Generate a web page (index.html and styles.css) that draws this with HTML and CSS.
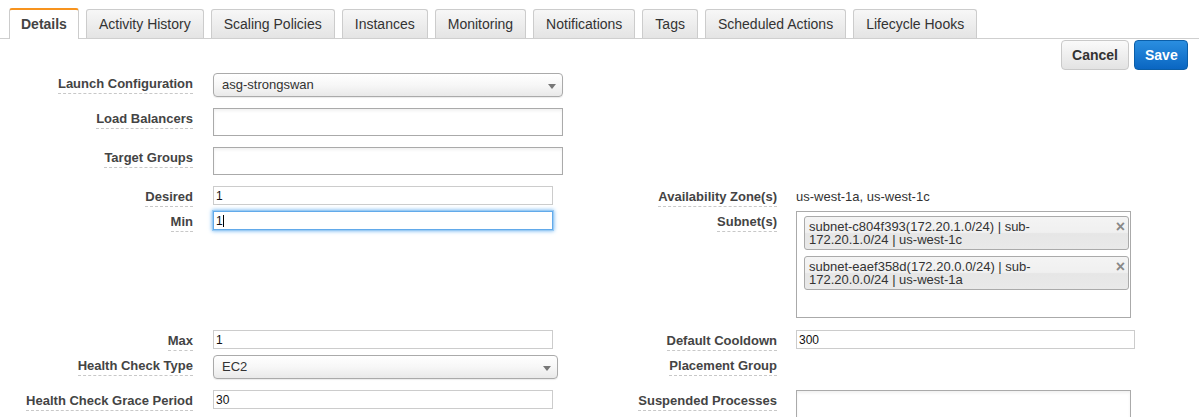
FILE: index.html
```html
<!DOCTYPE html>
<html>
<head>
<meta charset="utf-8">
<link rel="stylesheet" href="styles.css">
</head>
<body>
<div class="tabs">
  <div class="tab active">Details</div>
  <div class="tab">Activity History</div>
  <div class="tab">Scaling Policies</div>
  <div class="tab">Instances</div>
  <div class="tab">Monitoring</div>
  <div class="tab">Notifications</div>
  <div class="tab">Tags</div>
  <div class="tab">Scheduled Actions</div>
  <div class="tab">Lifecycle Hooks</div>
</div>
<div class="toolbar">
  <button class="btn btn-cancel">Cancel</button>
  <button class="btn btn-save">Save</button>
</div>
<div class="form">
  <div class="lab"><span>Launch Configuration</span></div>
  <div class="fld"><div class="select w350"><span>asg-strongswan</span><i class="arrow"></i></div></div>
  <div class="lab2"></div><div class="fld2"></div>

  <div class="lab"><span>Load Balancers</span></div>
  <div class="fld"><div class="multi w350"></div></div>
  <div class="lab2"></div><div class="fld2"></div>

  <div class="lab"><span>Target Groups</span></div>
  <div class="fld"><div class="multi w350"></div></div>
  <div class="lab2"></div><div class="fld2"></div>

  <div class="lab"><span>Desired</span></div>
  <div class="fld"><input class="text w340" value="1"></div>
  <div class="lab2"><span>Availability Zone(s)</span></div>
  <div class="fld2"><div class="value">us-west-1a, us-west-1c</div></div>

  <div class="lab"><span>Min</span></div>
  <div class="fld"><div class="focuswrap"><input class="text w340 focus" value="1"><i class="caret"></i></div></div>
  <div class="lab2"><span>Subnet(s)</span></div>
  <div class="fld2">
    <div class="subnets">
      <div class="chip"><div class="chiptext"><div>subnet-c804f393(172.20.1.0/24) | sub-</div><div>172.20.1.0/24 | us-west-1c</div></div><span class="x">×</span></div>
      <div class="chip"><div class="chiptext"><div>subnet-eaef358d(172.20.0.0/24) | sub-</div><div>172.20.0.0/24 | us-west-1a</div></div><span class="x">×</span></div>
    </div>
  </div>

  <div class="lab"><span>Max</span></div>
  <div class="fld"><input class="text w340" value="1"></div>
  <div class="lab2"><span>Default Cooldown</span></div>
  <div class="fld2"><input class="text w339" value="300"></div>

  <div class="lab"><span>Health Check Type</span></div>
  <div class="fld"><div class="select w345"><span>EC2</span><i class="arrow"></i></div></div>
  <div class="lab2"><span>Placement Group</span></div>
  <div class="fld2"></div>

  <div class="lab"><span>Health Check Grace Period</span></div>
  <div class="fld"><input class="text w340" value="30"></div>
  <div class="lab2"><span>Suspended Processes</span></div>
  <div class="fld2"><div class="multi w335 tall"></div></div>
</div>
</body>
</html>
```
FILE: styles.css
```css
* { box-sizing: border-box; }
html, body { margin: 0; padding: 0; background: #fff; }
body {
  font-family: "Liberation Sans", Arial, Helvetica, sans-serif;
  color: #333;
  font-size: 13px;
  overflow: hidden;
  height: 417px;
}
.tabs {
  display: flex;
  align-items: flex-end;
  gap: 7px;
  padding: 8px 0 0 9px;
  border-bottom: 1px solid #cfcfcf;
}
.tab {
  height: 29px;
  line-height: 28px;
  padding: 0 12px;
  font-size: 14px;
  color: #333;
  border: 1px solid #cccccc;
  border-bottom: none;
  border-radius: 3px 3px 0 0;
  background: linear-gradient(#f7f7f7, #e4e4e4);
  white-space: nowrap;
}
.tab.active {
  height: 31px;
  margin-bottom: -1px;
  border-top: 2px solid #f7931e;
  background: #fff;
  font-weight: bold;
  color: #444;
  line-height: 29px;
  padding: 0 11px;
}
.toolbar {
  display: flex;
  justify-content: flex-end;
  gap: 5px;
  padding: 1px 11px 0 0;
}
.btn {
  height: 30px;
  font-family: "Liberation Sans", Arial, sans-serif;
  font-size: 14px;
  font-weight: bold;
  border-radius: 4px;
  padding: 0 10px;
  cursor: pointer;
}
.btn-cancel {
  width: 68px;
  color: #333;
  border: 1px solid #c9c9c9;
  background: linear-gradient(#fafafa, #e3e3e3);
}
.btn-save {
  width: 54px;
  color: #fff;
  border: 1px solid #0b5ea8;
  background: linear-gradient(#2a8ee0, #0a66c2);
}
.form {
  display: grid;
  grid-template-columns: 213px 350px 233px 403px;
  padding-top: 3px;
}
.lab, .lab2 {
  text-align: right;
  padding-right: 20px;
}
.lab2 { padding-right: 19px; }
.lab span, .lab2 span {
  display: inline-block;
  font-weight: bold;
  color: #444;
  font-size: 13px;
  line-height: 15px;
  padding-top: 3px;
  padding-bottom: 2px;
  border-bottom: 1px dashed #c8c8c8;
}
.fld, .fld2 { min-height: 1px; }
.w350 { width: 350px; }
.w345 { width: 345px; }
.w340 { width: 340px; }
.w339 { width: 339px; }
.w335 { width: 335px; }
.select {
  position: relative;
  height: 24px;
  border: 1px solid #aaa;
  border-radius: 4px;
  background: linear-gradient(#ffffff 0%, #f7f7f7 50%, #e9e9e9 100%);
  box-shadow: 0 1px 1px rgba(0,0,0,0.08);
  padding: 0 0 0 8px;
  font-size: 13px;
  line-height: 22px;
  color: #333;
  margin-bottom: 11px;
}
.arrow {
  position: absolute;
  right: 6px;
  top: 10px;
  width: 0;
  height: 0;
  border-left: 4px solid transparent;
  border-right: 4px solid transparent;
  border-top: 5px solid #777;
}
.multi {
  height: 28px;
  border: 1px solid #aaa;
  background: #fff;
  box-shadow: inset 0 2px 3px rgba(0,0,0,0.06);
  margin-bottom: 11px;
}
.multi.tall { height: 60px; }
.text {
  display: block;
  height: 19px;
  border: 1px solid #cccccc;
  padding: 0 2px;
  font-family: "Liberation Sans", Arial, sans-serif;
  font-size: 12px;
  color: #111;
  margin: 0 0 6px 0;
  outline: none;
  background: #fff;
}
.focuswrap { position: relative; width: 340px; }
.text.focus {
  border: 1px solid #62aaea;
  box-shadow: 0 0 0 1px #9bcbf3, 0 0 4px 1px #6db4f2;
}
.caret {
  position: absolute;
  left: 10px;
  top: 4px;
  width: 1px;
  height: 12px;
  background: #000;
}
.value {
  font-size: 13px;
  color: #333;
  line-height: 15px;
  padding-top: 3px;
}
.subnets {
  width: 335px;
  height: 107px;
  border: 1px solid #aaa;
  background: #fff;
  padding: 4px 1px 0 7px;
  margin-bottom: 12px;
  display: flex;
  flex-direction: column;
  gap: 6px;
}
.chip {
  display: flex;
  justify-content: space-between;
  border: 1px solid #aaa;
  border-radius: 3px;
  background: linear-gradient(#f4f4f4 0%, #f0f0f0 48%, #e6e6e6 52%, #e9e9e9 100%);
  padding: 2px 2px 2px 4px;
  font-size: 13px;
  line-height: 13px;
  color: #333;
  height: 34px;
}
.chiptext { padding-top: 1px; }
.x {
  font-size: 16px;
  font-weight: bold;
  color: #888;
  line-height: 15px;
  padding-right: 1px;
}
```
